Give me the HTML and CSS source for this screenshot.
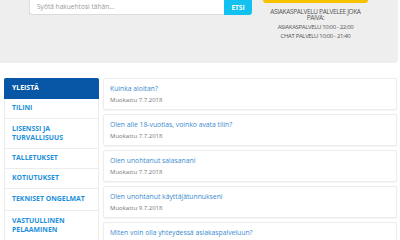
FILE: index.html
```html
<!DOCTYPE html>
<html lang="fi">
<head>
    <meta charset="UTF-8">
    <title>Asiakaspalvelu</title>
    <link rel="stylesheet" href="styles.css">
</head>
<body>
    <header class="haku">
        <div class="hakurivi">
            <div class="hakukentta">Syötä hakuehtosi tähän...</div>
            <button class="etsi">ETSI</button>
        </div>
        <div class="palvelu">
            <div class="chat-nappi"></div>
            <p class="otsikko">ASIAKASPALVELU PALVELEE JOKA PÄIVÄ:</p>
            <p>ASIAKASPALVELU 10:00 - 22:00</p>
            <p>CHAT PALVELU 10:00 - 21:40</p>
        </div>
    </header>

    <main class="sisalto">
        <ul class="kategoriat">
            <li class="valittu">YLEISTÄ</li>
            <li>TILINI</li>
            <li class="kaksi">LISENSSI JA<br>TURVALLISUUS</li>
            <li>TALLETUKSET</li>
            <li>KOTIUTUKSET</li>
            <li class="pitka">TEKNISET ONGELMAT</li>
            <li class="kaksi">VASTUULLINEN<br>PELAAMINEN</li>
        </ul>

        <div class="kysymykset">
            <div class="kortti">
                <a>Kuinka aloitan?</a>
                <span>Muokattu 7.7.2018</span>
            </div>
            <div class="kortti">
                <a>Olen alle 18-vuotias, voinko avata tilin?</a>
                <span>Muokattu 7.7.2018</span>
            </div>
            <div class="kortti">
                <a>Olen unohtanut salasanani</a>
                <span>Muokattu 7.7.2018</span>
            </div>
            <div class="kortti">
                <a>Olen unohtanut käyttäjätunnukseni</a>
                <span>Muokattu 9.7.2018</span>
            </div>
            <div class="kortti">
                <a>Miten voin olla yhteydessä asiakaspalveluun?</a>
                <span>Muokattu 7.7.2018</span>
            </div>
        </div>
    </main>
</body>
</html>
```

FILE: styles.css
```css
body {
    margin: 0;
    font-family: "Open Sans", Arial, sans-serif;
    background: #fff;
    overflow: hidden;
}

/* Hakualue */
.haku {
    background: #eeeeee;
    height: 63px;
    margin-right: 2px;
    border-radius: 0 0 4px 0;
    display: flex;
}

.hakurivi {
    display: flex;
    margin-left: 29px;
    height: 15px;
}

.hakukentta {
    width: 187px;
    background: #fff;
    border: 1px solid #dcdcdc;
    border-top: none;
    border-right: none;
    border-radius: 0 0 0 3px;
    color: #9a9a9a;
    font-size: 6.6px;
    line-height: 14px;
    padding-left: 7px;
}

.etsi {
    width: 28px;
    border: none;
    padding: 0;
    background: #13c1f0;
    color: #fff;
    font-family: "Open Sans", Arial, sans-serif;
    font-weight: bold;
    font-size: 6.5px;
    border-radius: 0 0 3px 0;
}

.palvelu {
    margin-left: 11px;
    width: 105px;
    text-align: center;
    color: #555;
    font-size: 6px;
    letter-spacing: -0.35px;
}

.chat-nappi {
    height: 3px;
    background: #f7c200;
    border-radius: 0 0 4px 4px;
}

.palvelu p {
    margin: 3px 0 0;
    line-height: 6px;
}

.palvelu .otsikko {
    margin-top: 6px;
    font-size: 6.5px;
    padding: 0 2px;
}

/* Sisältö */
.sisalto {
    display: flex;
    gap: 4px;
    padding: 15px 3px 0 4px;
}

.kategoriat {
    list-style: none;
    margin: 0;
    padding: 0;
    width: 95px;
    flex-shrink: 0;
}

.kategoriat li {
    height: 20px;
    box-sizing: border-box;
    display: flex;
    align-items: center;
    padding-left: 7px;
    border: 1px solid #ececec;
    border-top: none;
    color: #1d8fdb;
    font-weight: bold;
    font-size: 6.9px;
    line-height: 8.5px;
}

.kategoriat li.kaksi {
    height: 30px;
}

.kategoriat li.pitka {
    height: 22px;
}

.kategoriat li.valittu {
    background: #0757a6;
    border-color: #0757a6;
    color: #fff;
    height: 21px;
    border-radius: 2px 2px 0 0;
}

.kysymykset {
    flex: 1;
    display: flex;
    flex-direction: column;
    gap: 4px;
}

.kortti {
    height: 32px;
    box-sizing: border-box;
    border: 1px solid #ececec;
    border-radius: 2px;
    box-shadow: 0 1px 1px rgba(0, 0, 0, 0.04);
    padding: 5px 0 0 6px;
    display: flex;
    flex-direction: column;
    gap: 3px;
}

.kortti a {
    color: #3a8ad0;
    font-size: 6.8px;
    line-height: 9px;
}

.kortti span {
    color: #777;
    font-size: 6px;
    line-height: 8px;
}
```
